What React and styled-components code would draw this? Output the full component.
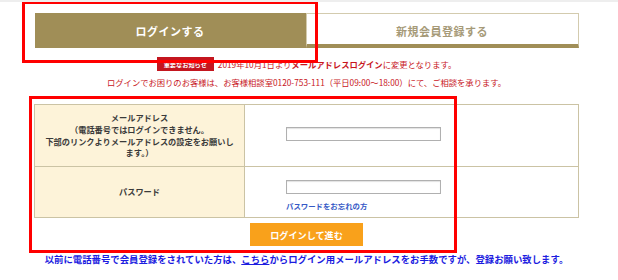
import React from 'react';
import styled, { createGlobalStyle } from 'styled-components';

const GlobalStyle = createGlobalStyle`
  body {
    margin: 0;
    background: #fff;
    font-family: "Noto Sans CJK JP", "Noto Sans", sans-serif;
  }
`;

const Page = styled.div`
  position: relative;
  width: 618px;
  height: 280px;
  overflow: hidden;
  border-top: 2px solid #eeeeee;
  box-sizing: border-box;
`;

const Wrap = styled.div`
  width: 545px;
  margin: 11px 0 0 34px;
  display: flex;
  flex-direction: column;
  align-items: center;
`;

const Tabs = styled.div`
  display: flex;
  width: 544px;
  height: 35px;
`;

const Tab = styled.div`
  flex: 1;
  display: flex;
  align-items: center;
  justify-content: center;
  box-sizing: border-box;
  font-size: 11px;
  font-weight: 700;
  letter-spacing: 0.5px;
  background: ${p => (p.$active ? '#a08e57' : '#fff')};
  color: ${p => (p.$active ? '#fff' : '#a69a78')};
  border: ${p => (p.$active ? 'none' : '1px solid #d3cbae')};
  border-bottom: ${p => (p.$active ? 'none' : '4px solid #a08e57')};
  padding-top: ${p => (p.$active ? '0' : '3px')};
`;

const Notice = styled.div`
  display: flex;
  align-items: center;
  gap: 4px;
  margin-top: 9px;
  height: 14px;
  color: #c8161d;
  font-size: 8.3px;
`;

const Badge = styled.span`
  display: inline-flex;
  align-items: center;
  justify-content: center;
  width: 57px;
  height: 14px;
  background: #c4161f;
  color: #fff;
  font-size: 6.2px;
  font-weight: 700;
`;

const Bold = styled.b`
  font-weight: 700;
`;

const Help = styled.div`
  margin-top: 4px;
  height: 14px;
  line-height: 14px;
  color: #c8161d;
  font-size: 8.3px;
`;

const Form = styled.div`
  margin-top: 15px;
  width: 545px;
  display: grid;
  grid-template-columns: 210px 1fr;
  grid-template-rows: 62px 50px;
  border: 1px solid #cbc3a4;
  box-sizing: border-box;
`;

const Label = styled.div`
  background: #fdf3d9;
  border-right: 1px solid #cbc3a4;
  border-bottom: ${p => (p.$last ? 'none' : '1px solid #cbc3a4')};
  display: flex;
  align-items: center;
  justify-content: center;
  text-align: center;
  padding: 0 2px;
  white-space: nowrap;
  font-size: 8.2px;
  line-height: 11.7px;
  font-weight: 700;
  color: #3a3a3a;
`;

const Field = styled.div`
  border-bottom: ${p => (p.$last ? 'none' : '1px solid #cbc3a4')};
  display: flex;
  flex-direction: column;
  justify-content: center;
  padding-left: 41px;
  padding-top: ${p => (p.$last ? '6px' : '0')};
`;

const Input = styled.input`
  width: 155px;
  height: 14px;
  box-sizing: border-box;
  border: 1px solid #b0b0b0;
  box-shadow: inset 0 1px 1px rgba(0, 0, 0, 0.12);
  margin: ${p => (p.$shift ? '-4px 0 0' : '0')};
  padding: 0;
`;

const Forgot = styled.a`
  margin-top: 6px;
  font-size: 7.4px;
  font-weight: 700;
  color: #3559c6;
  text-decoration: none;
`;

const Submit = styled.button`
  margin-top: 5px;
  width: 113px;
  height: 23px;
  border: none;
  background: #f9a11b;
  color: #fff;
  font-family: inherit;
  font-size: 9.1px;
  font-weight: 700;
  padding: 0;
`;

const Bottom = styled.div`
  margin-top: 6px;
  font-size: 9.4px;
  font-weight: 700;
  color: #1c1ce0;
  white-space: nowrap;
  a {
    color: #1c1ce0;
    text-decoration: underline;
  }
`;

const Mark = styled.div`
  position: absolute;
  border: 3px solid #ff0000;
  box-sizing: border-box;
  pointer-events: none;
  left: ${p => p.$x}px;
  top: ${p => p.$y}px;
  width: ${p => p.$w}px;
  height: ${p => p.$h}px;
`;

export default function App() {
  return (
    <>
      <GlobalStyle />
      <Page>
        <Wrap>
          <Tabs>
            <Tab $active>ログインする</Tab>
            <Tab>新規会員登録する</Tab>
          </Tabs>
          <Notice>
            <Badge>重要なお知らせ</Badge>
            <span>
              2019年10月1日より<Bold>メールアドレスログイン</Bold>に変更となります。
            </span>
          </Notice>
          <Help>
            ログインでお困りのお客様は、お客様相談室0120-753-111（平日09:00〜18:00）にて、ご相談を承ります。
          </Help>
          <Form>
            <Label>
              メールアドレス<br />
              （電話番号ではログインできません。<br />
              下部のリンクよりメールアドレスの設定をお願いし<br />
              ます。）
            </Label>
            <Field>
              <Input type="text" $shift />
            </Field>
            <Label $last>パスワード</Label>
            <Field $last>
              <Input type="password" />
              <Forgot href="#">パスワードをお忘れの方</Forgot>
            </Field>
          </Form>
          <Submit>ログインして進む</Submit>
          <Bottom>
            以前に電話番号で会員登録をされていた方は、<a href="#">こちら</a>からログイン用メールアドレスをお手数ですが、登録お願い致します。
          </Bottom>
        </Wrap>
        <Mark $x={22} $y={-1} $w={296} $h={62} />
        <Mark $x={29} $y={94} $w={428} $h={157} />
      </Page>
    </>
  );
}
